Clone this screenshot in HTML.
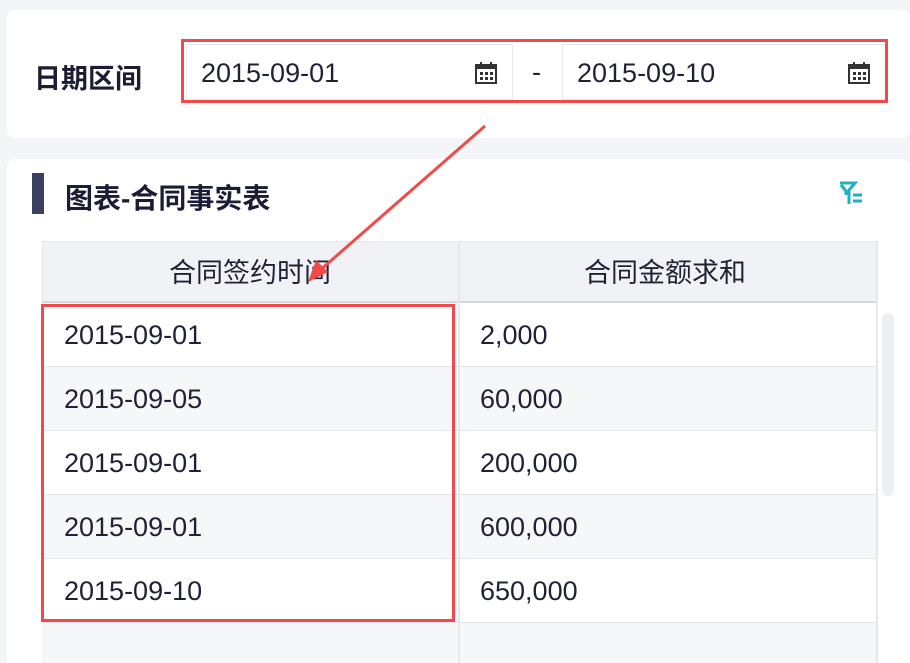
<html><head><style>
html,body{margin:0;width:910px;height:663px;overflow:hidden}
body{background:#f4f5f8;font-family:"Liberation Sans","Noto Sans CJK SC",sans-serif;position:relative;color:#1f2235}
.card{position:absolute;background:#fff;border-radius:8px}
.inp{position:absolute;top:44px;height:56px;border:1px solid #e6e8ee;background:#fff;font-size:27px;line-height:56px;box-sizing:border-box;padding-left:14px}
.cal{position:absolute;right:14px;top:17px}
.row{position:absolute;left:42px;width:835px;height:64px;border-bottom:1px solid #e4e6ec;font-size:27px;line-height:64px;box-sizing:border-box}
.row span{position:absolute;left:22px}
.row b{position:absolute;left:438px;font-weight:normal}
</style></head><body>
<div class="card" style="left:7px;top:10px;width:903px;height:128px"></div>
<div class="card" style="left:7px;top:159px;width:903px;height:504px;border-radius:8px 8px 0 0"></div>
<div style="position:absolute;left:34px;top:57px;font-size:27px;font-weight:bold;color:#1a1d33">日期区间</div>
<div class="inp" style="left:186px;width:327px">2015-09-01<svg class="cal" width="24" height="22" viewBox="0 0 24 22"><rect x="2" y="3" width="20" height="18" fill="none" stroke="#333" stroke-width="2"/><rect x="2" y="3" width="20" height="4" fill="#333"/><path d="M7 0v5M17 0v5" stroke="#333" stroke-width="2"/><g fill="#333"><rect x="6" y="10" width="3" height="3"/><rect x="11" y="10" width="3" height="3"/><rect x="16" y="10" width="3" height="3"/><rect x="6" y="15" width="3" height="3"/><rect x="11" y="15" width="3" height="3"/><rect x="16" y="15" width="3" height="3"/></g></svg></div>
<div style="position:absolute;left:532px;top:57px;font-size:27px">-</div>
<div class="inp" style="left:562px;width:324px">2015-09-10<svg class="cal" width="24" height="22" viewBox="0 0 24 22"><rect x="2" y="3" width="20" height="18" fill="none" stroke="#333" stroke-width="2"/><rect x="2" y="3" width="20" height="4" fill="#333"/><path d="M7 0v5M17 0v5" stroke="#333" stroke-width="2"/><g fill="#333"><rect x="6" y="10" width="3" height="3"/><rect x="11" y="10" width="3" height="3"/><rect x="16" y="10" width="3" height="3"/><rect x="6" y="15" width="3" height="3"/><rect x="11" y="15" width="3" height="3"/><rect x="16" y="15" width="3" height="3"/></g></svg></div>
<div style="position:absolute;left:181px;top:39px;width:707px;height:64px;border:3px solid #f24a4a;box-sizing:border-box"></div>
<div style="position:absolute;left:32px;top:173px;width:12px;height:41px;background:#3b4060"></div>
<div style="position:absolute;left:65px;top:177px;font-size:28px;font-weight:bold;color:#1a1d33">图表-合同事实表</div>
<svg style="position:absolute;left:838px;top:181px" width="28" height="25" viewBox="0 0 28 25"><path d="M2 2h15l-6 7v14" fill="none" stroke="#1fb0c8" stroke-width="3"/><path d="M3 4l5 6v4" fill="none" stroke="#1fb0c8" stroke-width="3"/><path d="M15 14h9M15 20h9" stroke="#1fb0c8" stroke-width="3"/></svg>
<div style="position:absolute;left:42px;top:241px;width:835px;height:62px;background:#f1f2f6;border:1px solid #e4e6ec;border-bottom:2px solid #d5d8e0;box-sizing:border-box;font-size:27px;line-height:62px">
<span style="position:absolute;left:126px">合同签约时间</span><span style="position:absolute;left:541px">合同金额求和</span></div>
<div class="row" style="top:303px;background:#fff"><span>2015-09-01</span><b>2,000</b></div>
<div class="row" style="top:367px;background:#f6f7f9"><span>2015-09-05</span><b>60,000</b></div>
<div class="row" style="top:431px;background:#fff"><span>2015-09-01</span><b>200,000</b></div>
<div class="row" style="top:495px;background:#f6f7f9"><span>2015-09-01</span><b>600,000</b></div>
<div class="row" style="top:559px;background:#fff"><span>2015-09-10</span><b>650,000</b></div>
<div class="row" style="top:623px;background:#f6f7f9"></div>
<div style="position:absolute;left:458px;top:241px;width:2px;height:422px;background:#e6e8ee"></div>
<div style="position:absolute;left:876px;top:241px;width:2px;height:422px;background:#e6e8ee"></div>
<div style="position:absolute;left:882px;top:313px;width:12px;height:183px;background:#eeeff2;border-radius:6px"></div>
<div style="position:absolute;left:41px;top:304px;width:414px;height:318px;border:3px solid #f24a4a;box-sizing:border-box"></div>
<svg style="position:absolute;left:0;top:0" width="910" height="663"><line x1="485" y1="126" x2="318" y2="272" stroke="#f24a4a" stroke-width="3"/><polygon points="308,282 316,260 328,272" fill="#f24a4a"/></svg>
</body></html>
